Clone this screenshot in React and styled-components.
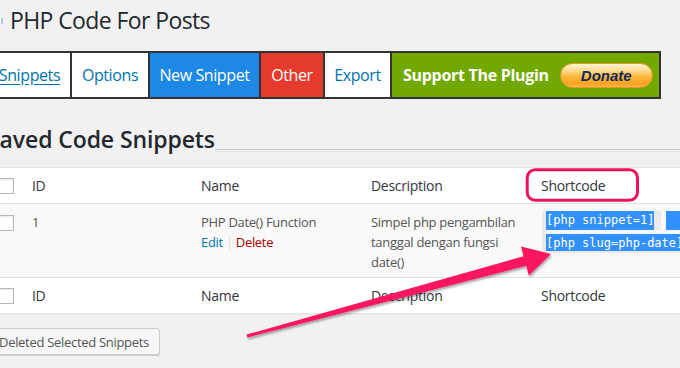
import React from "react"
import styled, { createGlobalStyle } from "styled-components"

const GlobalStyle = createGlobalStyle`
  html, body {
    margin: 0;
    padding: 0;
    background: #f1f1f1;
    font-family: "Open Sans", "Noto Sans", sans-serif;
    color: #23282d;
  }
`

const Page = styled.div`
  position: relative;
  width: 680px;
  height: 368px;
  overflow: hidden;
`

const Wrap = styled.div`
  margin-left: -13px;
  width: 760px;
`

const TitleRow = styled.div`
  display: flex;
  align-items: center;
  gap: 7px;
  padding-top: 6px;
`

const TitleIcon = styled.span`
  width: 14px;
  height: 6px;
  margin-top: 1px;
  background: #fff;
  border-right: 2px solid #b7c3e8;
`

const Title = styled.h1`
  margin: 0;
  font-size: 23px;
  font-weight: 400;
  line-height: 29px;
  letter-spacing: -0.6px;
  color: #23282d;
`

const TabBar = styled.div`
  display: flex;
  margin-top: 16px;
  width: max-content;
  border: 2px solid #333;
`

const tabColors = {
  plain: { bg: "#fff", fg: "#0073aa" },
  blue: { bg: "#1e88e5", fg: "#fff" },
  red: { bg: "#e53b2c", fg: "#fff" },
}

const Tab = styled.a`
  display: flex;
  align-items: center;
  justify-content: center;
  width: ${p => p.w}px;
  height: 44px;
  border-right: 2px solid #333;
  background: ${p => tabColors[p.kind].bg};
  color: ${p => tabColors[p.kind].fg};
  font-size: 16px;
  letter-spacing: -0.4px;
  white-space: nowrap;
  text-decoration: ${p => (p.active ? "underline" : "none")};
  text-underline-offset: 3px;
`

const Support = styled.div`
  display: flex;
  align-items: center;
  width: 256px;
  padding-left: 11px;
  height: 44px;
  background: #72a900;
  color: #fff;
  font-size: 16px;
  font-weight: 700;
  letter-spacing: -0.3px;
`

const Donate = styled.span`
  display: flex;
  align-items: center;
  justify-content: center;
  width: 91px;
  height: 23px;
  margin-left: 11px;
  border: 1px solid #e5982a;
  border-radius: 13px;
  background: linear-gradient(#fff3d6 0%, #ffd98a 30%, #fdb83f 55%, #f9a322 85%, #fbb54a 100%);
  color: #0d2a5a;
  font-family: "Liberation Sans", Arial, sans-serif;
  font-size: 15px;
  font-style: italic;
  font-weight: 700;
  letter-spacing: 0;
`

const HeadingRow = styled.div`
  display: flex;
  margin-top: 26px;
`

const Heading = styled.h2`
  margin: 0;
  font-size: 23px;
  font-weight: 600;
  line-height: 29px;
  letter-spacing: -0.1px;
  color: #23282d;
`

const HeadLine = styled.div`
  flex: 1;
  height: 1px;
  margin-top: 24px;
  border-top: 1px solid #c9c9c9;
  border-bottom: 1px solid #e2e2e2;
`

const Table = styled.div`
  margin-top: 13px;
  background: #fff;
  border: 1px solid #e5e5e5;
  box-shadow: 0 1px 1px rgba(0, 0, 0, 0.04);
`

const Row = styled.div`
  display: grid;
  grid-template-columns: 34px 169px 170px 170px 1fr;
  align-items: ${p => (p.body ? "start" : "center")};
  height: ${p => (p.body ? "auto" : "35px")};
  padding: ${p => (p.body ? "8px 0 5px" : "0")};
  background: ${p => (p.body ? "#f9f9f9" : "#fff")};
  border-bottom: ${p => (p.last ? "none" : "1px solid #e1e1e1")};
`

const Cell = styled.div`
  padding-left: 10px;
  font-size: ${p => (p.head ? "14px" : "13px")};
  line-height: 20px;
  color: ${p => (p.head ? "#32373c" : "#555")};
  letter-spacing: -0.3px;
`

const Check = styled.span`
  display: block;
  width: 16px;
  height: 16px;
  margin-left: 10px;
  margin-top: ${p => (p.body ? "3px" : "0")};
  box-sizing: border-box;
  border: 1px solid #b4b9be;
  background: #fff;
  box-shadow: inset 0 1px 2px rgba(0, 0, 0, 0.1);
`

const Actions = styled.div`
  font-size: 13px;
  line-height: 20px;
`

const ActLink = styled.a`
  color: ${p => (p.danger ? "#a00" : "#0073aa")};
  text-decoration: none;
`

const Sep = styled.span`
  color: #ddd;
  margin: 0 3px;
`

const CodeCell = styled.div`
  padding-left: 11px;
  margin-top: -1px;
`

const CodeLine = styled.div`
  display: flex;
  height: ${p => (p.first ? "22px" : "19px")};
  background: linear-gradient(to right, #eaeaea 4px, transparent 4px);
`

const Code = styled.code`
  display: block;
  height: 19px;
  margin-top: ${p => (p.first ? "0" : "1px")};
  padding-left: 4px;
  padding-right: ${p => (p.tail ? "7px" : "3px")};
  background: linear-gradient(to bottom, #eaeaea 19px, transparent 19px);
  font-family: "DejaVu Sans Mono", "Liberation Mono", monospace;
  font-size: 12px;
  line-height: 19px;
  white-space: pre;
`

const Selected = styled.span`
  display: block;
  height: ${p => (p.short ? "17px" : "19px")};
  background: #3390ff;
  color: #fff;
`

const Gap = styled.span`
  width: 5px;
`

const Break = styled.span`
  width: 20px;
  height: 19px;
  background: #3390ff;
`

const Button = styled.button`
  margin-top: 14px;
  margin-left: 1px;
  height: 27px;
  padding: 0 10px;
  border: 1px solid #ccc;
  border-radius: 3px;
  background: #f7f7f7;
  box-shadow: 0 1px 0 #ccc;
  font-family: "Open Sans", "Noto Sans", sans-serif;
  font-size: 13px;
  letter-spacing: -0.3px;
  color: #555;
`

const Overlay = styled.svg`
  position: absolute;
  left: 0;
  top: 0;
  pointer-events: none;
`

export default function App() {
  return (
    <Page>
      <GlobalStyle />
      <Wrap>
        <TitleRow>
          <TitleIcon />
          <Title>PHP Code For Posts</Title>
        </TitleRow>

        <TabBar>
          <Tab kind="plain" w={81} active>Snippets</Tab>
          <Tab kind="plain" w={76}>Options</Tab>
          <Tab kind="blue" w={109}>New Snippet</Tab>
          <Tab kind="red" w={62}>Other</Tab>
          <Tab kind="plain" w={65}>Export</Tab>
          <Support>
            Support The Plugin
            <Donate>Donate</Donate>
          </Support>
        </TabBar>

        <HeadingRow>
          <Heading>Saved Code Snippets</Heading>
          <HeadLine />
        </HeadingRow>

        <Table>
          <Row>
            <Check />
            <Cell head>ID</Cell>
            <Cell head>Name</Cell>
            <Cell head>Description</Cell>
            <Cell head>Shortcode</Cell>
          </Row>
          <Row body>
            <Check body />
            <Cell>1</Cell>
            <Cell>
              PHP Date() Function
              <Actions>
                <ActLink>Edit</ActLink>
                <Sep>|</Sep>
                <ActLink danger>Delete</ActLink>
              </Actions>
            </Cell>
            <Cell>
              Simpel php pengambilan
              <br />
              tanggal dengan fungsi
              <br />
              date()
            </Cell>
            <CodeCell>
              <CodeLine first>
                <Code first tail><Selected>[php snippet=1]</Selected></Code>
                <Gap />
                <Break />
              </CodeLine>
              <CodeLine>
                <Code><Selected short>[php slug=php-date]</Selected></Code>
              </CodeLine>
            </CodeCell>
          </Row>
          <Row last>
            <Check />
            <Cell head>ID</Cell>
            <Cell head>Name</Cell>
            <Cell head>Description</Cell>
            <Cell head>Shortcode</Cell>
          </Row>
        </Table>

        <Button>Deleted Selected Snippets</Button>
      </Wrap>

      <Overlay width="680" height="368" viewBox="0 0 680 368">
        <defs>
          <filter id="sh" x="-10%" y="-10%" width="120%" height="130%">
            <feDropShadow dx="1" dy="2" stdDeviation="1.2" floodColor="#000" floodOpacity="0.35" />
          </filter>
        </defs>
        <rect x="527.2" y="169.8" width="110.3" height="30.4" rx="8" fill="none" stroke="#ea145b" strokeWidth="3" />
        <polygon
          filter="url(#sh)"
          fill="#fb1561"
          points="246.6,334.6 523.6,256.2 521,246.5 551,254 528.8,275.5 526.2,265.8 247.4,337.4"
        />
      </Overlay>
    </Page>
  )
}
